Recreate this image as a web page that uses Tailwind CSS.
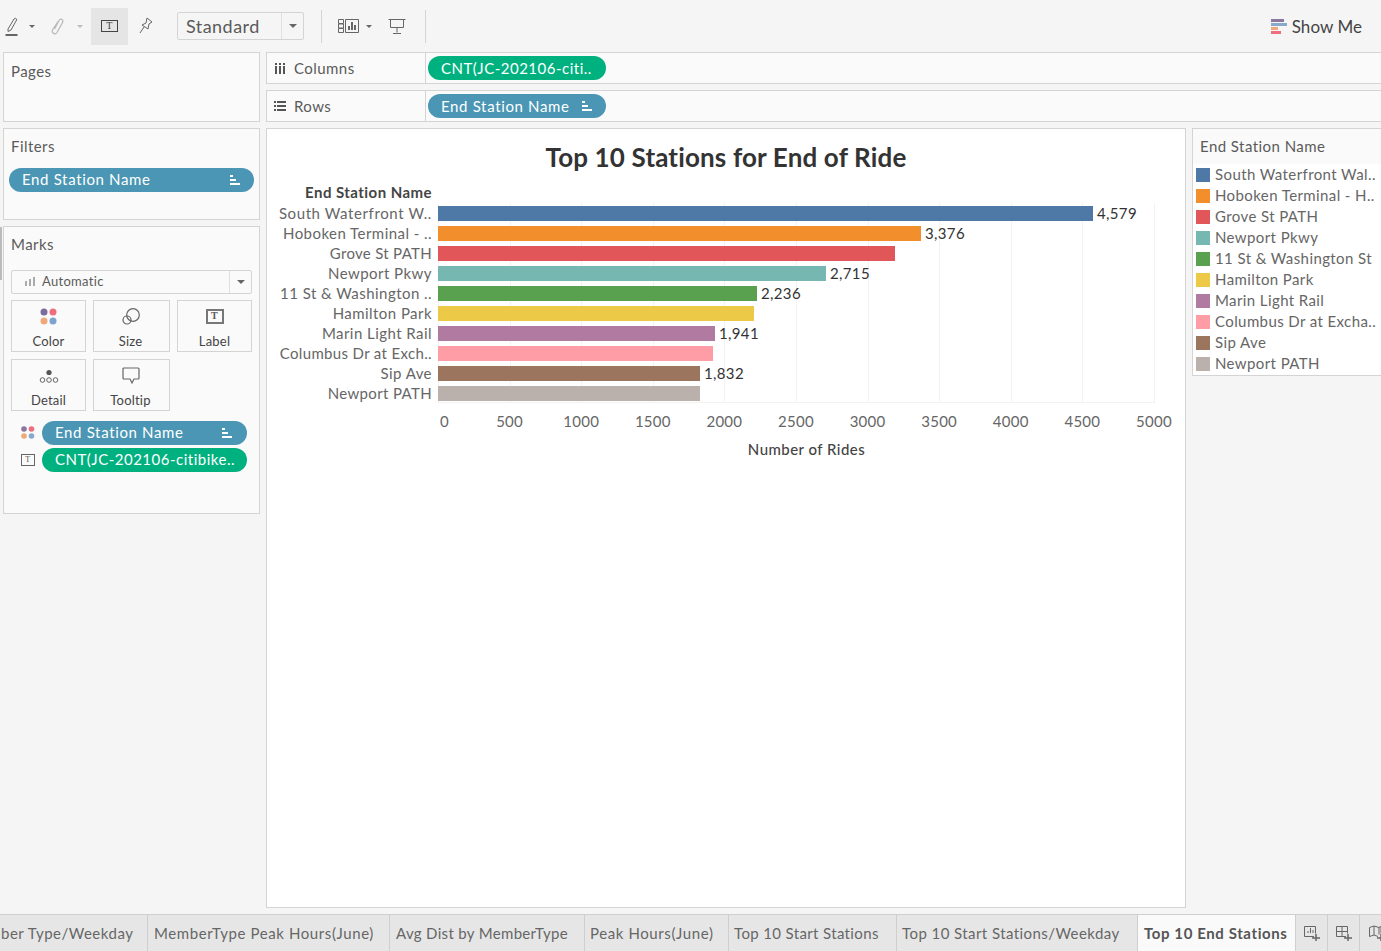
<!DOCTYPE html>
<html lang="en">
<head>
    <meta charset="UTF-8">
    <title>Top 10 End Stations</title>
    <script src="https://cdn.jsdelivr.net/npm/@tailwindcss/browser@4"></script>
</head>
<body class="relative h-[951px] w-[1381px] overflow-hidden bg-[#f5f5f5] font-[Lato,sans-serif] text-[15px] tracking-[0.45px] text-[#5a5a5a]">
    <div class="absolute left-0 top-[227px] h-[53px] w-[2px] bg-[#bbb]"></div>
    <!-- toolbar -->
    <div class="flex h-[52px] items-center">
        <div class="ml-[4px] flex h-[37px] w-[87px] items-center">
            <svg width="14" height="19" viewBox="0 0 14 19" class="ml-[1px]" fill="none" stroke="#666"><path d="M3 12 L9 2 Q10.500 0.500 11.500 2 Q12 3 11 4 L6 13 L3 14.500 Z"/><path d="M0.500 18h12" stroke-width="2"/></svg>
            <span class="ml-[10px] h-0 w-0 border-x-[3px] border-t-[3px] border-x-transparent border-t-[#666]"></span>
            <svg width="13" height="17" viewBox="0 0 13 17" class="ml-[16px]" fill="none" stroke="#bbb" stroke-width="1.300"><path d="M3.500 11 L8 2.500 C9.500 0 13 1.500 11.500 4.500 L6 14.500 C4.500 17 0 15 1.500 12 L7 3.500"/></svg>
            <span class="ml-[13px] h-0 w-0 border-x-[3px] border-t-[3px] border-x-transparent border-t-[#bbb]"></span>
        </div>
        <div class="flex h-[37px] w-[37px] items-center justify-center bg-[#e5e5e5]">
            <div class="flex h-[12px] w-[17px] items-center justify-center border border-[#444] font-[Liberation_Serif,serif] text-[10px] leading-none text-[#444]">T</div>
        </div>
        <div class="flex w-[36px] justify-center">
            <svg width="16" height="18" viewBox="0 0 16 18" fill="none" stroke="#666"><path d="M9 1 L14 5 L11 7 L10 12 L4 8 L8 6 Z M6 10 L2 16"/></svg>
        </div>
        <div class="ml-[13px] flex h-[28px] w-[127px] items-center rounded-[2px] border border-[#d4d4d4] text-[18px]">
            <span class="flex-1 pl-[8px]">Standard</span>
            <span class="flex h-full w-[22px] items-center justify-center border-l border-[#e0e0e0]"><span class="h-0 w-0 border-x-[4px] border-t-[4px] border-x-transparent border-t-[#666]"></span></span>
        </div>
        <div class="ml-[17px] h-[33px] w-px bg-[#d4d4d4]"></div>
        <div class="ml-[16px] flex items-center">
            <svg width="21" height="16" viewBox="0 0 21 16" fill="none" stroke="#666"><path d="M.5 1.500h5v4h-5zM.5 6h5v4h-5zM.5 10.500h5v4h-5zM7.500 1.500h13v13h-13z"/><path d="M11 12V8M14 12V4M17 12V7" stroke-width="2"/></svg>
            <span class="ml-[7px] h-0 w-0 border-x-[3px] border-t-[3px] border-x-transparent border-t-[#666]"></span>
        </div>
        <svg width="18" height="18" viewBox="0 0 18 18" class="ml-[16px]" fill="none" stroke="#666"><path d="M.5 2.500h17M2.500 2.500v8h13v-8M9 10.500v5M5 16.500h8"/></svg>
        <div class="ml-[19px] h-[33px] w-px bg-[#d4d4d4]"></div>
        <div class="ml-auto mr-[19px] mt-[1px] flex items-center text-[17px] tracking-[0.05px] text-[#444]">
            <div class="mr-[5px] flex flex-col gap-[1px]">
                <span class="h-[3px] w-[13px] bg-[#8d77a0]"></span>
                <span class="h-[3px] w-[16px] bg-[#86a9cc]"></span>
                <span class="h-[3px] w-[7px] bg-[#f0a878]"></span>
                <span class="h-[3px] w-[10px] bg-[#ee6e7e]"></span>
            </div>
            Show Me
        </div>
    </div>

    <div class="flex h-[862px]">
        <!-- left column -->
        <div class="ml-[3px] flex w-[257px] flex-col gap-[6px]">
            <div class="h-[70px] border border-[#d4d4d4] bg-[#fafafa] px-[7px] pt-[7px]">Pages</div>
            <div class="h-[92px] border border-[#d4d4d4] bg-[#fafafa] px-[5px]">
                <div class="mt-[6px] ml-[2px]">Filters</div>
                <div class="mt-[10px] flex h-[24px] items-center justify-between rounded-full bg-[#4a96b4] pl-[13px] pr-[13px] tracking-[0.65px] text-white">
                    End Station Name
                    <svg width="11" height="10" viewBox="0 0 11 10" fill="#fff"><path d="M0 0h3v2H0zM0 4h6v2H0zM0 8h10v2H0z"/></svg>
                </div>
            </div>
            <div class="h-[288px] border border-[#d4d4d4] bg-[#fafafa] px-[7px]">
                <div class="mt-[6px]">Marks</div>
                <div class="mt-[14px] flex h-[24px] items-center rounded-[2px] border border-[#d4d4d4] text-[13px] tracking-[0.3px]">
                    <svg width="10" height="9" viewBox="0 0 10 9" class="ml-[13px] mr-[7px]" fill="#aaa"><path d="M0 4h2v5H0zM4 2h2v7H4zM8 0h2v9H8z"/></svg>
                    <span class="flex-1">Automatic</span>
                    <span class="flex h-full w-[22px] items-center justify-center border-l border-[#e0e0e0]"><span class="h-0 w-0 border-x-[4px] border-t-[4px] border-x-transparent border-t-[#666]"></span></span>
                </div>
                <div class="mt-[6px] grid grid-cols-[75px_77px_75px] gap-x-[7px] gap-y-[7px] text-[13px] tracking-[0.2px] text-[#444]">
                    <div class="flex h-[52px] flex-col items-center border border-[#d4d4d4] pt-[7px]">
                        <svg width="17" height="17" viewBox="0 0 17 17"><circle cx="4" cy="4" r="3.500" fill="#7d6b9c"/><circle cx="13" cy="4" r="3.500" fill="#ee6e7e"/><circle cx="4" cy="13" r="3.500" fill="#f0a878"/><circle cx="13" cy="13" r="3.500" fill="#7ea3cf"/></svg>
                        <span class="mt-[8px] leading-[17px]">Color</span>
                    </div>
                    <div class="flex h-[52px] flex-col items-center border border-[#d4d4d4] pt-[7px] pr-[2px]">
                        <svg width="18" height="17" viewBox="0 0 18 17" fill="none" stroke="#666" stroke-width="1.200"><circle cx="11" cy="7" r="6.300"/><circle cx="5" cy="12" r="4"/></svg>
                        <span class="mt-[8px] leading-[17px]">Size</span>
                    </div>
                    <div class="flex h-[52px] flex-col items-center border border-[#d4d4d4] pt-[8px]">
                        <div class="flex h-[15px] w-[18px] items-center justify-center border-2 border-[#777] font-[Liberation_Serif,serif] text-[10px] font-bold leading-none text-[#555]">T</div>
                        <span class="mt-[9px] leading-[17px]">Label</span>
                    </div>
                    <div class="flex h-[52px] flex-col items-center border border-[#d4d4d4] pt-[9px]">
                        <svg width="20" height="15" viewBox="0 0 20 15" fill="none" stroke="#666"><circle cx="10" cy="3.500" r="2.600" fill="#555" stroke="none"/><circle cx="3.500" cy="11" r="2.300"/><circle cx="10" cy="11" r="2.300"/><circle cx="16.500" cy="11" r="2.300"/></svg>
                        <span class="mt-[8px] leading-[17px]">Detail</span>
                    </div>
                    <div class="flex h-[52px] flex-col items-center border border-[#d4d4d4] pt-[7px] pr-[2px]">
                        <svg width="18" height="18" viewBox="0 0 18 18" fill="none" stroke="#666" stroke-width="1.200"><path d="M2 1h14q1 0 1 1v9q0 1-1 1h-4l-2 4-2-4H2q-1 0-1-1V2q0-1 1-1z"/></svg>
                        <span class="mt-[7px] leading-[17px]">Tooltip</span>
                    </div>
                </div>
                <div class="mt-[10px] flex h-[24px] items-center pl-[10px]">
                    <svg width="14" height="13" viewBox="0 0 14 13" class="mr-[7px] shrink-0"><circle cx="3" cy="3" r="2.800" fill="#8d77a0"/><circle cx="10.500" cy="3" r="2.800" fill="#ee6e7e"/><circle cx="3" cy="10" r="2.800" fill="#f0a878"/><circle cx="10.500" cy="10" r="2.800" fill="#86a9cc"/></svg>
                    <div class="flex h-[24px] w-[205px] items-center justify-between rounded-full bg-[#4a96b4] pl-[13px] pr-[14px] tracking-[0.65px] text-white">
                        End Station Name
                        <svg width="11" height="10" viewBox="0 0 11 10" fill="#fff"><path d="M0 0h3v2H0zM0 4h6v2H0zM0 8h10v2H0z"/></svg>
                    </div>
                </div>
                <div class="mt-[3px] flex h-[24px] items-center pl-[10px]">
                    <div class="mr-[7px] flex h-[12px] w-[14px] shrink-0 items-center justify-center border border-[#666] font-[Liberation_Serif,serif] text-[8px] leading-none text-[#555]">T</div>
                    <div class="flex h-[24px] w-[205px] items-center whitespace-nowrap rounded-full bg-[#00b180] pl-[13px] tracking-[0.5px] text-white">CNT(JC-202106-citibike..</div>
                </div>
            </div>
        </div>

        <!-- center and right -->
        <div class="ml-[6px] flex w-[1115px] flex-col gap-[6px]">
            <div class="flex h-[32px] items-center border border-r-0 border-[#d4d4d4] bg-[#fafafa]">
                <div class="flex h-full w-[159px] items-center border-r border-[#d4d4d4] pl-[8px]">
                    <svg width="11" height="11" viewBox="0 0 11 11" fill="#555" class="mr-[8px]"><path d="M0 3h2v8H0zM4 3h2v8H4zM8 3h2v8H8zM0 0h2v2H0zM4 0h2v2H4zM8 0h2v2H8z"/></svg>
                    Columns
                </div>
                <div class="ml-[2px] flex h-[24px] w-[178px] items-center whitespace-nowrap rounded-full bg-[#00b180] pl-[13px] tracking-[0.5px] text-white">CNT(JC-202106-citi..</div>
            </div>
            <div class="flex h-[32px] items-center border border-r-0 border-[#d4d4d4] bg-[#fafafa]">
                <div class="flex h-full w-[159px] items-center border-r border-[#d4d4d4] pl-[7px]">
                    <svg width="12" height="10" viewBox="0 0 12 10" fill="#555" class="mr-[8px]"><path d="M0 0h2v2H0zM3 0h9v2H3zM0 4h2v2H0zM3 4h9v2H3zM0 8h2v2H0zM3 8h9v2H3z"/></svg>
                    Rows
                </div>
                <div class="ml-[2px] flex h-[24px] w-[178px] items-center justify-between rounded-full bg-[#4a96b4] pl-[13px] pr-[13px] tracking-[0.65px] text-white">
                    End Station Name
                    <svg width="11" height="10" viewBox="0 0 11 10" fill="#fff"><path d="M0 0h3v2H0zM0 4h6v2H0zM0 8h10v2H0z"/></svg>
                </div>
            </div>
            <div class="flex flex-1 items-start gap-[6px]">
                <!-- chart -->
                <div class="h-[780px] w-[920px] border border-[#d4d4d4] bg-white">
                    <div class="mt-[11px] text-center text-[26px] font-bold leading-[34px] tracking-[0.15px] text-[#333]">Top 10 Stations for End of Ride</div>
                    <div class="mt-[8px] w-[165px] text-right font-bold leading-[20px] text-[#444]">End Station Name</div>
                    <div class="relative mt-[1px] ml-[171px] h-[200px] w-[717px] border-b border-[#f2f2f2] text-[#666]">
                        <div class="absolute inset-0 flex justify-between">
                            <i class="w-px bg-[#f2f2f2]"></i><i class="w-px bg-[#f2f2f2]"></i><i class="w-px bg-[#f2f2f2]"></i><i class="w-px bg-[#f2f2f2]"></i><i class="w-px bg-[#f2f2f2]"></i><i class="w-px bg-[#f2f2f2]"></i><i class="w-px bg-[#f2f2f2]"></i><i class="w-px bg-[#f2f2f2]"></i><i class="w-px bg-[#f2f2f2]"></i><i class="w-px bg-[#f2f2f2]"></i><i class="w-px bg-[#f2f2f2]"></i>
                        </div>
                        <div class="relative flex flex-col">
                            <div class="flex h-[20px] items-center"><span class="absolute right-full mr-[6px] whitespace-nowrap tracking-[0.6px]">South Waterfront W..</span><div class="h-[15px] w-[655px] bg-[#4e79a7]"></div><span class="ml-[4px] tracking-[0.35px] text-[#333]">4,579</span></div>
                            <div class="flex h-[20px] items-center"><span class="absolute right-full mr-[6px] whitespace-nowrap">Hoboken Terminal - ..</span><div class="h-[15px] w-[483px] bg-[#f28e2b]"></div><span class="ml-[4px] tracking-[0.35px] text-[#333]">3,376</span></div>
                            <div class="flex h-[20px] items-center"><span class="absolute right-full mr-[6px] whitespace-nowrap tracking-[0.3px]">Grove St PATH</span><div class="h-[15px] w-[457px] bg-[#e15759]"></div></div>
                            <div class="flex h-[20px] items-center"><span class="absolute right-full mr-[6px] whitespace-nowrap">Newport Pkwy</span><div class="h-[15px] w-[388px] bg-[#76b7b2]"></div><span class="ml-[4px] tracking-[0.35px] text-[#333]">2,715</span></div>
                            <div class="flex h-[20px] items-center"><span class="absolute right-full mr-[6px] whitespace-nowrap">11 St &amp; Washington ..</span><div class="h-[15px] w-[319px] bg-[#59a14f]"></div><span class="ml-[4px] tracking-[0.35px] text-[#333]">2,236</span></div>
                            <div class="flex h-[20px] items-center"><span class="absolute right-full mr-[6px] whitespace-nowrap">Hamilton Park</span><div class="h-[15px] w-[316px] bg-[#edc948]"></div></div>
                            <div class="flex h-[20px] items-center"><span class="absolute right-full mr-[6px] whitespace-nowrap">Marin Light Rail</span><div class="h-[15px] w-[277px] bg-[#b07aa1]"></div><span class="ml-[4px] tracking-[0.35px] text-[#333]">1,941</span></div>
                            <div class="flex h-[20px] items-center"><span class="absolute right-full mr-[6px] whitespace-nowrap tracking-[0.35px]">Columbus Dr at Exch..</span><div class="h-[15px] w-[275px] bg-[#ff9da7]"></div></div>
                            <div class="flex h-[20px] items-center"><span class="absolute right-full mr-[6px] whitespace-nowrap">Sip Ave</span><div class="h-[15px] w-[262px] bg-[#9c755f]"></div><span class="ml-[4px] tracking-[0.35px] text-[#333]">1,832</span></div>
                            <div class="flex h-[20px] items-center"><span class="absolute right-full mr-[6px] whitespace-nowrap tracking-[0.35px]">Newport PATH</span><div class="h-[15px] w-[262px] bg-[#bab0ac]"></div></div>
                        </div>
                    </div>
                    <div class="ml-[171px] mt-[8px] flex h-[20px] w-[716px] justify-between leading-[20px] tracking-[0.25px] text-[#666]">
                        <span class="relative left-[2px] w-0">0</span><span class="flex w-0 justify-center">500</span><span class="flex w-0 justify-center">1000</span><span class="flex w-0 justify-center">1500</span><span class="flex w-0 justify-center">2000</span><span class="flex w-0 justify-center">2500</span><span class="flex w-0 justify-center">3000</span><span class="flex w-0 justify-center">3500</span><span class="flex w-0 justify-center">4000</span><span class="flex w-0 justify-center">4500</span><span class="flex w-0 justify-center">5000</span>
                    </div>
                    <div class="ml-[171px] mt-[8px] w-[737px] text-center font-medium leading-[20px] text-[#444]">Number of Rides</div>
                </div>
                <!-- legend -->
                <div class="flex h-[248px] flex-1 flex-col border border-r-0 border-[#d4d4d4] bg-white">
                    <div class="h-[35px] bg-[#fafafa] pl-[7px] pt-[7px] leading-[20px]">End Station Name</div>
                    <div class="flex flex-col pl-[3px] tracking-[0.4px] text-[#666]">
                        <div class="flex h-[21px] items-center whitespace-nowrap"><i class="mr-[5px] h-[14px] w-[14px] bg-[#4e79a7]"></i>South Waterfront Wal..</div>
                        <div class="flex h-[21px] items-center whitespace-nowrap"><i class="mr-[5px] h-[14px] w-[14px] bg-[#f28e2b]"></i>Hoboken Terminal - H..</div>
                        <div class="flex h-[21px] items-center whitespace-nowrap"><i class="mr-[5px] h-[14px] w-[14px] bg-[#e15759]"></i>Grove St PATH</div>
                        <div class="flex h-[21px] items-center whitespace-nowrap"><i class="mr-[5px] h-[14px] w-[14px] bg-[#76b7b2]"></i>Newport Pkwy</div>
                        <div class="flex h-[21px] items-center whitespace-nowrap"><i class="mr-[5px] h-[14px] w-[14px] bg-[#59a14f]"></i>11 St &amp; Washington St</div>
                        <div class="flex h-[21px] items-center whitespace-nowrap"><i class="mr-[5px] h-[14px] w-[14px] bg-[#edc948]"></i>Hamilton Park</div>
                        <div class="flex h-[21px] items-center whitespace-nowrap"><i class="mr-[5px] h-[14px] w-[14px] bg-[#b07aa1]"></i>Marin Light Rail</div>
                        <div class="flex h-[21px] items-center whitespace-nowrap"><i class="mr-[5px] h-[14px] w-[14px] bg-[#ff9da7]"></i>Columbus Dr at Excha..</div>
                        <div class="flex h-[21px] items-center whitespace-nowrap"><i class="mr-[5px] h-[14px] w-[14px] bg-[#9c755f]"></i>Sip Ave</div>
                        <div class="flex h-[21px] items-center whitespace-nowrap"><i class="mr-[5px] h-[14px] w-[14px] bg-[#bab0ac]"></i>Newport PATH</div>
                    </div>
                </div>
            </div>
        </div>
    </div>

    <!-- sheet tabs -->
    <div class="flex h-[37px] items-stretch overflow-hidden border-t border-[#cfcfcf] bg-[#e6e6e6] leading-[36px] tracking-[0.6px] text-[#666]">
        <div class="w-[148px] shrink-0 overflow-hidden whitespace-nowrap border-r border-[#cfcfcf] pl-[1px] tracking-[0.5px]">ber Type/Weekday</div>
        <div class="w-[242px] shrink-0 whitespace-nowrap border-r border-[#cfcfcf] pl-[6px]">MemberType Peak Hours(June)</div>
        <div class="w-[195px] shrink-0 whitespace-nowrap border-r border-[#cfcfcf] pl-[6px] tracking-[0.33px]">Avg Dist by MemberType</div>
        <div class="w-[144px] shrink-0 whitespace-nowrap border-r border-[#cfcfcf] pl-[5px]">Peak Hours(June)</div>
        <div class="w-[168px] shrink-0 whitespace-nowrap border-r border-[#cfcfcf] pl-[5px] tracking-[0.36px]">Top 10 Start Stations</div>
        <div class="w-[241px] shrink-0 whitespace-nowrap border-r border-[#cfcfcf] pl-[5px] tracking-[0.43px]">Top 10 Start Stations/Weekday</div>
        <div class="w-[158px] shrink-0 whitespace-nowrap border-r border-[#cfcfcf] bg-[#fafafa] pl-[6px] font-bold text-[#555]">Top 10 End Stations</div>
        <div class="flex w-[32px] shrink-0 items-center justify-center border-r border-[#cfcfcf]">
            <svg width="16" height="16" viewBox="0 0 16 16" fill="none" stroke="#666"><path d="M10 11.500H.5V1.500h11v7M4 8V6M6.500 8V3M9 8V5"/><path d="M8 13h8M12 9v7" stroke-width="1.500"/></svg>
        </div>
        <div class="flex w-[32px] shrink-0 items-center justify-center border-r border-[#cfcfcf]">
            <svg width="16" height="16" viewBox="0 0 16 16" fill="none" stroke="#666"><path d="M10 11.500H.5V1.500h11v7M.5 6.500h11M6 1.500v10"/><path d="M8 13h8M12 9v7" stroke-width="1.500"/></svg>
        </div>
        <div class="flex flex-1 items-center pl-[9px]">
            <svg width="16" height="16" viewBox="0 0 16 16" class="shrink-0" fill="none" stroke="#666"><path d="M9 11.500L5 10 .5 11.500v-9L5 1l5 1.500 2-1v7M5 1v9M10 2.500v7"/><path d="M8 13h8M12 9v7" stroke-width="1.500"/></svg>
        </div>
    </div>
</body>
</html>
